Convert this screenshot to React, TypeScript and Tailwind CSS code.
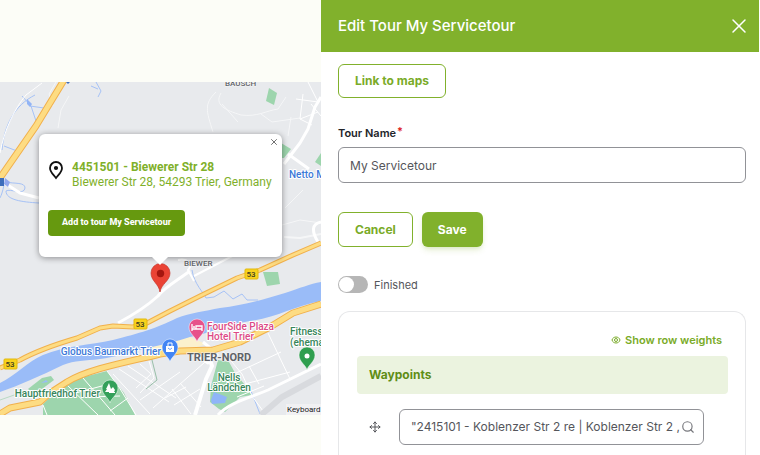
import type { ReactNode } from "react";
import { Move, Search, X } from "lucide-react";

type RoadProps = {
  d: string;
  width?: number;
};

function Highway({ d, width = 5 }: RoadProps) {
  return (
    <g fill="none" strokeLinejoin="round">
      <path d={d} stroke="#f1b04c" strokeWidth={width} />
      <path d={d} stroke="#fddc83" strokeWidth={width - 2} />
    </g>
  );
}

function Street({ d, width = 1 }: RoadProps) {
  return <path d={d} fill="none" stroke="#fff" strokeWidth={width} strokeLinejoin="round" />;
}

function RouteShield({ x, y }: { x: number; y: number }) {
  return (
    <g>
      <rect x={x - 6} y={y - 5} width="13" height="10" rx="1" fill="#f8d21c" stroke="#e2b90c" />
      <text x={x} y={y + 3} textAnchor="middle" fontSize="8" fontWeight="500" fill="#3c3a20">
        53
      </text>
    </g>
  );
}

function Poi({ x, y, color, children }: { x: number; y: number; color: string; children: ReactNode }) {
  return (
    <g transform={`translate(${x} ${y})`}>
      <path d="M0 14 C-1 9 -8 6 -8 -1 A8 8 0 1 1 8 -1 C8 6 1 9 0 14Z" fill={color} stroke="#fff" strokeWidth=".5" />
      {children}
    </g>
  );
}

type LabelProps = {
  x: number;
  y: number;
  color: string;
  anchor?: "start" | "end" | "middle";
  children: string;
};

function Label({ x, y, color, anchor = "start", children }: LabelProps) {
  return (
    <text
      x={x}
      y={y}
      textAnchor={anchor}
      fontSize="10"
      fontWeight="500"
      fill={color}
      stroke="#fff"
      strokeWidth="2"
      strokeLinejoin="round"
      paintOrder="stroke"
    >
      {children}
    </text>
  );
}

function TourMap() {
  return (
    <svg
      viewBox="0 82 321 333"
      preserveAspectRatio="xMidYMid slice"
      className="block h-[333px] w-full bg-[#e8eaed] font-[Roboto,sans-serif]"
      role="img"
      aria-label="Map of Trier"
    >
      {/* parks */}
      <g fill="#9dd5ad">
        <path d="M269 88 L277 93 L274 105 L266 101Z" />
        <path d="M281 143 L291 149 L284 158 L281 158Z" />
        <path d="M321 153 L315 162 L321 166Z" />
        <path d="M263 272 L278 272 L280 284 L267 286Z" />
        <path d="M43 404 L55 393 L72 380 L107 371 L124 393 L135 415 L43 415Z" />
        <path d="M28 389 L42 378 L51 376 L54 380 L42 389 L33 393Z" />
        <path d="M218 360 L229 362 L235 373 L245 385 L252 395 L240 397 L225 412 L219 409 L210 402 L211 386Z" />
      </g>
      <path d="M160 335 L190 337 L206 344 L190 350 L160 352 L140 357Z" fill="#fbf1cd" />

      {/* water */}
      <path
        d="M0 383 C15 376 28 361 43 355 C65 346 90 345 113 340 C140 333 155 329 177 318 C190 313 205 311 220 308 C245 305 265 299 285 293 C300 288 310 284 321 282 L321 301 C295 306 275 318 250 321 C225 325 210 333 190 337 C175 342 160 345 143 349 C125 354 115 357 100 359 C85 361 75 360 63 365 C40 376 20 385 0 392Z"
        fill="#9abcf8"
      />
      <path d="M214 392 L227 397 L225 403 L212 404 L211 400Z" fill="#8fb5f8" />
      <path d="M46 380 L41 383 L48 382Z" fill="#9abcf8" />
      <g fill="none" stroke="#a6c2f6">
        <path d="M35 95 C15 105 4 125 2 150" />
        <path d="M22 96 L31 106 L38 127 M30 106 L44 108" />
        <path d="M96 82 L101 91 L98 97 M98 89 L91 86" />
        <path d="M4 146 L17 151" />
        <path d="M4 184 C3 192 0 198 0 198 M6 182 C15 184 25 182 25 188 C24 196 10 188 6 191 C6 200 22 202 39 203" />
        <path d="M192 270 C194 284 204 293 206 298 L214 297 L224 291 L233 299 L242 294 L247 300 L258 300" />
        <path d="M251 391 L260 414" />
      </g>
      <path d="M27 99 L32 104 L30 107 L27 104Z" fill="#92b4f5" />

      {/* streets */}
      <Street d="M0 153 C4 130 15 108 26 95 L42 83" />
      <g opacity=".6">
        <Street d="M56 82 L49 94 L53 106 M69 96 L61 110 L58 128" />
        <Street d="M216 92 C204 104 206 110 213 132" />
        <Street d="M221 93 C214 105 225 110 241 115 C258 117 265 111 278 109 L286 97 M222 104 L238 122" />
        <Street d="M261 114 L272 122 L300 118 M291 117 L288 136" />
        <Street d="M282 225 L300 220 L321 223 M285 208 L303 190" />
        <Street d="M284 237 L300 238 L321 234" width={2} />
      </g>
      <Street d="M321 97 L315 107 L308 129 L300 143 L284 164" width={3} />
      <Street d="M288 154 L309 169" width={3} />
      <Street d="M308 82 L318 102 L296 99 M303 94 L300 119 L318 112 M311 104 L321 116 M300 119 L312 125" />
      <Street d="M0 180 L20 193 L39 198" width={3} />
      <Street d="M118 323 C133 315 145 308 158 296 C165 287 178 280 190 271" width={3} />
      <Street d="M178 260 C188 258 193 265 188 270 L194 281 M194 276 L236 254" width={2} />
      <Street d="M321 222 C311 224 312 232 318 242" width={3} />
      <Street d="M43 405 L47 415 M67 385 L98 415 M83 378 L115 415 M107 371 L119 387 L136 415" />
      <Street d="M57 398 L113 383 M88 397 L120 396 M110 411 L128 398" />
      <Street d="M113 374 L150 414 M119 369 L169 402 M128 366 L176 398 M140 364 L151 374 L136 388 M149 361 L154 378 L140 393" />
      <Street d="M140 400 L180 372 M153 408 L205 362 M172 389 L191 414 M180 383 L201 407 M165 398 L186 387 M174 405 L200 389" />
      <Street d="M206 348 L212 366 L206 379 L195 415" width={4} />
      <Street d="M190 351 L208 363 L218 354 M203 342 L215 352" width={3} />
      <Street d="M222 350 L242 374 L252 396 L266 415 M268 333 L290 379 M236 373 L281 352 M249 366 L259 384 M245 384 L290 372 M237 397 L264 386" />
      <Street d="M218 415 C230 402 252 397 268 390 L321 364" width={3} />
      <path d="M321 376 L282 397 L261 415" fill="none" stroke="#d8dade" strokeWidth="6" />
      <path d="M150 352 L157 380 L146 389" fill="none" stroke="#98bfa8" />
      <path d="M0 400 L20 393 L34 391" fill="none" stroke="#b9d9c3" />

      {/* main roads */}
      <Highway d="M64 80 L36 126 L0 178" width={7} />
      <Highway d="M0 368 L20 360 C40 349 60 343 77 338 L100 328 L113 326 L133 327 L147 323 L170 311 L200 296 L237 278 L260 270 L293 255 L321 243" />
      <Highway d="M0 414 L10 408 L40 402 L50 393 L67 382 C90 368 133 361 160 354 L180 351 L213 350 L240 342 L270 327 L293 313 L321 304" width={7} />
      <path d="M0 178 h4 v8 h-4Z" fill="#3d6dbb" />
      <path d="M66 82 h4 l-2 2Z" fill="#3d6dbb" />
      <path d="M5 178 L10 182 L8 187 L4 184Z" fill="#92a8ee" />
      <RouteShield x={251} y={274} />
      <RouteShield x={140} y={324} />
      <RouteShield x={10} y={364} />

      {/* labels */}
      <g fontSize="8" fontWeight="500" fill="#5f6368" stroke="#f5f6f7" strokeWidth="1" paintOrder="stroke">
        <text x="225" y="86">BAUSCH</text>
        <text x="184" y="266">BIEWER</text>
        <text x="187" y="361" fontSize="11" fontWeight="700">TRIER-NORD</text>
      </g>
      <Label x={289} y={178} color="#3b78d8">Netto Marken</Label>
      <Label x={161} y={355} color="#3b78d8" anchor="end">Globus Baumarkt Trier</Label>
      <Label x={100} y={397} color="#37855a" anchor="end">Hauptfriedhof Trier</Label>
      <Label x={207} y={330} color="#dc4a86">FourSide Plaza</Label>
      <Label x={207} y={340} color="#dc4a86">Hotel Trier</Label>
      <Label x={290} y={335} color="#37855a">Fitness</Label>
      <Label x={290} y={346} color="#37855a">(ehemals)</Label>
      <Label x={229} y={381} color="#37855a" anchor="middle">Nells</Label>
      <Label x={229} y={391} color="#37855a" anchor="middle">Ländchen</Label>

      <Poi x={197} y={328} color="#e7528b">
        <path d="M-5 -4 V3 M-5 1 H5 V3 M5 1 V-2 H-1 V1" fill="none" stroke="#fff" strokeWidth="1.3" />
        <circle cx="-3" cy="-1" r="1" fill="#fff" />
      </Poi>
      <Poi x={170} y={348} color="#4285f4">
        <path d="M-4 -2 H4 V4 H-4Z" fill="#fff" />
        <path d="M-2 -2 V-5 H2 V-2" fill="none" stroke="#fff" />
        <path d="M-2 0 Q0 3 2 0" fill="none" stroke="#4285f4" strokeWidth=".8" />
      </Poi>
      <Poi x={110} y={389} color="#34a05a">
        <path d="M-1 -6 L-4 0 H-3 L-5 3 H-1 V4 H5 V3 H4 L5 1 L3 -2 L1 0Z" fill="#fff" />
      </Poi>
      <Poi x={307} y={356} color="#2f9e4f">
        <circle r="2.5" fill="#fff" />
      </Poi>
      <rect x="286" y="404" width="35" height="11" fill="#f2f3f4" opacity=".8" />
      <text x="287" y="412" fontSize="8" fill="#222">Keyboard shortcuts</text>

      {/* selected stop */}
      <path d="M160 292 C159 284 151 281 151 273 A9 9 0 0 1 170 273 C170 281 161 284 160 292Z" fill="#ea4335" stroke="#c5352a" strokeWidth=".7" />
      <circle cx="160.500" cy="273.500" r="3.700" fill="#a5160f" />
    </svg>
  );
}

function InfoWindow() {
  return (
    <div className="absolute left-[39px] top-[52px] h-[123px] w-[243px] rounded-md bg-white px-[9px] font-[Roboto,sans-serif] shadow-[0_1px_6px_rgba(0,0,0,0.4)]">
      <button type="button" aria-label="Close" className="absolute right-0.5 top-0.5 p-px text-[#555]">
        <X className="size-2.5" />
      </button>
      <div className="flex items-start gap-2 pt-[26px] text-xs leading-[15px] text-[#7fb02a]">
        <svg viewBox="0 0 16 20" className="h-5 w-4 shrink-0" fill="none" stroke="#111" strokeWidth="1.800">
          <path d="M8 18 C5 14 2 12 2 8 A6 6 0 0 1 14 8 C14 12 11 14 8 18Z" />
          <circle cx="8" cy="8" r="1.200" fill="#111" />
        </svg>
        <div className="whitespace-nowrap">
          <p className="font-bold">4451501 - Biewerer Str 28</p>
          <p>Biewerer Str 28, 54293 Trier, Germany</p>
        </div>
      </div>
      <button type="button" className="mt-5 block h-[26px] rounded bg-[#66990f] px-3.5 text-[9px] font-extrabold text-white">
        Add to tour My Servicetour
      </button>
      <span className="absolute left-[113px] top-full h-2 w-4 bg-white [clip-path:polygon(0_0,100%_0,50%_100%)]" />
    </div>
  );
}

function WaypointsCard() {
  return (
    <section className="mt-[18px] grow rounded-t-xl border border-b-0 border-[#e6e7e9] pl-[18px] pr-[17px] pt-5">
      <div className="flex justify-end pr-1.5">
        <button type="button" className="flex h-4 items-center gap-1 text-[11px] font-semibold text-[#7aab28]">
          <svg viewBox="0 0 10 8" className="h-2 w-2.5" fill="none" stroke="currentColor">
            <path d="M1 4 C2 0 8 0 9 4 C8 8 2 8 1 4Z" />
            <circle cx="5" cy="4" r="1.500" />
          </svg>
          Show row weights
        </button>
      </div>
      <table className="mt-2 w-full table-fixed border-separate border-spacing-0">
        <colgroup>
          <col className="w-[42px]" />
          <col />
          <col className="w-6" />
        </colgroup>
        <thead>
          <tr>
            <th colSpan={3} className="h-[38px] rounded bg-[#ebf3df] px-3 text-left text-xs font-bold text-[#5f8d16]">
              Waypoints
            </th>
          </tr>
        </thead>
        <tbody>
          <tr>
            <td className="pl-3 pt-[15px]">
              <button type="button" aria-label="Drag to re-order" className="block text-[#55565b]">
                <Move className="size-3" />
              </button>
            </td>
            <td className="pt-[15px]">
              <div className="flex h-9 items-center rounded-md border border-[#919297] pl-[11px] pr-2">
                <input
                  aria-label="Waypoint"
                  defaultValue={'"2415101 - Koblenzer Str 2 re | Koblenzer Str 2 ,'}
                  className="min-w-0 grow bg-transparent text-xs text-[#55565b] outline-none"
                />
                <Search className="size-3.5 shrink-0 text-[#77787d]" />
              </div>
            </td>
            <td />
          </tr>
        </tbody>
      </table>
    </section>
  );
}

function EditTourPanel() {
  return (
    <aside className="flex min-w-0 flex-col bg-white">
      <header className="flex h-[52px] items-center justify-between bg-[#81b12c] pl-[17px] pr-2 text-white">
        <h1 className="text-[15px] font-medium">Edit Tour My Servicetour</h1>
        <button type="button" aria-label="Close panel">
          <X className="size-6" strokeWidth={1.5} />
        </button>
      </header>
      <form className="flex grow flex-col pl-[17px] pr-[13px] pt-3" onSubmit={(e) => e.preventDefault()}>
        <a href="#maps" className="flex h-[34px] items-center self-start rounded-md border border-[#81b12c] px-4 text-xs font-bold text-[#7aab28]">
          Link to maps
        </a>

        <label htmlFor="tour-name" className="mt-[27px] text-[11px] font-semibold leading-4 text-[#232429]">
          Tour Name
          <span className="ml-px align-top leading-3 text-[#dc2323]">*</span>
        </label>
        <input
          id="tour-name"
          required
          defaultValue="My Servicetour"
          className="mt-1.5 h-9 rounded-md border border-[#919297] px-[11px] text-xs text-[#55565b] outline-none"
        />

        <div className="mt-[29px] flex gap-[9px]">
          <button type="button" className="h-[35px] rounded-md border border-[#81b12c] px-4 text-xs font-bold text-[#7aab28]">
            Cancel
          </button>
          <button type="submit" className="h-[35px] rounded-md bg-[#81b12c] px-4 text-xs font-bold text-white shadow-md shadow-[#81b12c]/20">
            Save
          </button>
        </div>

        <label className="mt-[29px] flex items-center gap-1.5 self-start text-[11px] leading-4 text-[#55565b]">
          <input
            type="checkbox"
            className="h-[17px] w-[30px] appearance-none rounded-full bg-[#b6b6b6] p-px before:block before:size-[15px] before:rounded-full before:bg-white checked:bg-[#81b12c] checked:before:ml-auto"
          />
          Finished
        </label>

        <WaypointsCard />
      </form>
    </aside>
  );
}

export default function App() {
  return (
    <main className="grid min-h-screen grid-cols-[321fr_438fr] bg-white pr-px font-[Inter,sans-serif]">
      <div className="min-w-0 overflow-hidden bg-[#fcfdf7] pt-[82px]">
        <div className="relative">
          <TourMap />
          <InfoWindow />
        </div>
      </div>
      <EditTourPanel />
    </main>
  );
}
